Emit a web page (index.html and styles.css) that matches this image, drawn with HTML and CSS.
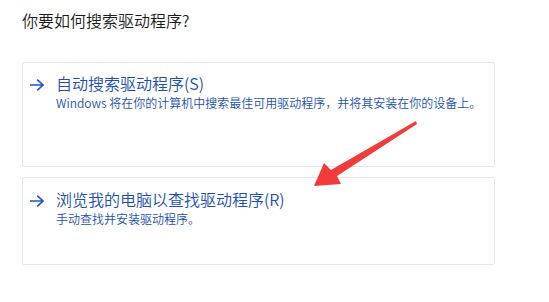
FILE: index.html
```html
<!DOCTYPE html>
<html lang="zh-CN">
<head>
<meta charset="utf-8">
<title>更新驱动程序</title>
<link rel="stylesheet" href="styles.css">
</head>
<body>
<div class="page">
  <h1 class="heading">你要如何搜索驱动程序?</h1>
  <div class="options">
    <div class="card card-auto">
      <div class="row">
        <svg class="go" width="14" height="12" viewBox="0 0 14 12"><path d="M0 6H13M7.2 0.6L13 6L7.2 11.4" fill="none" stroke="#1a56cf" stroke-width="1.6"/></svg>
        <div class="texts">
          <div class="title">自动搜索驱动程序(S)</div>
          <div class="desc">Windows 将在你的计算机中搜索最佳可用驱动程序，并将其安装在你的设备上。</div>
        </div>
      </div>
    </div>
    <div class="card card-browse">
      <div class="row">
        <svg class="go" width="14" height="12" viewBox="0 0 14 12"><path d="M0 6H13M7.2 0.6L13 6L7.2 11.4" fill="none" stroke="#1a56cf" stroke-width="1.6"/></svg>
        <div class="texts">
          <div class="title">浏览我的电脑以查找驱动程序(R)</div>
          <div class="desc">手动查找并安装驱动程序。</div>
        </div>
      </div>
    </div>
  </div>
  <svg class="pointer" width="549" height="302" viewBox="0 0 549 302">
    <polygon points="416,121 417,124 337,176 341,184 314,186 324,163 331,170" fill="#f23b3b"/>
  </svg>
</div>
</body>
</html>
```
FILE: styles.css
```css
html, body {
  margin: 0;
  padding: 0;
  background: #ffffff;
}
.page {
  position: relative;
  width: 549px;
  height: 302px;
  padding: 10px 0 0 22px;
  box-sizing: border-box;
  font-family: "Noto Sans CJK SC", "Microsoft YaHei", sans-serif;
}
.heading {
  margin: 0;
  font-size: 16px;
  line-height: 20px;
  font-weight: 350;
  color: #1c1c1c;
}
.options {
  margin-top: 32px;
  display: flex;
  flex-direction: column;
  gap: 10px;
  width: 473px;
}
.card {
  border: 1px solid #e6e6e6;
  border-radius: 2px;
  background: #ffffff;
  box-sizing: border-box;
  padding: 9px 0 0 7px;
}
.card-auto { height: 105px; }
.card-browse { height: 88px; padding-top: 10px; }
.row {
  display: flex;
  align-items: flex-start;
  gap: 12px;
}
.go {
  margin-top: 7px;
  flex: none;
}
.title {
  font-size: 16px;
  line-height: 22px;
  font-weight: 350;
  color: #1a4fb8;
}
.desc {
  font-size: 12px;
  line-height: 18px;
  font-weight: 350;
  color: #1a4fb8;
}
.pointer {
  position: absolute;
  left: 0;
  top: 0;
  pointer-events: none;
}
```
